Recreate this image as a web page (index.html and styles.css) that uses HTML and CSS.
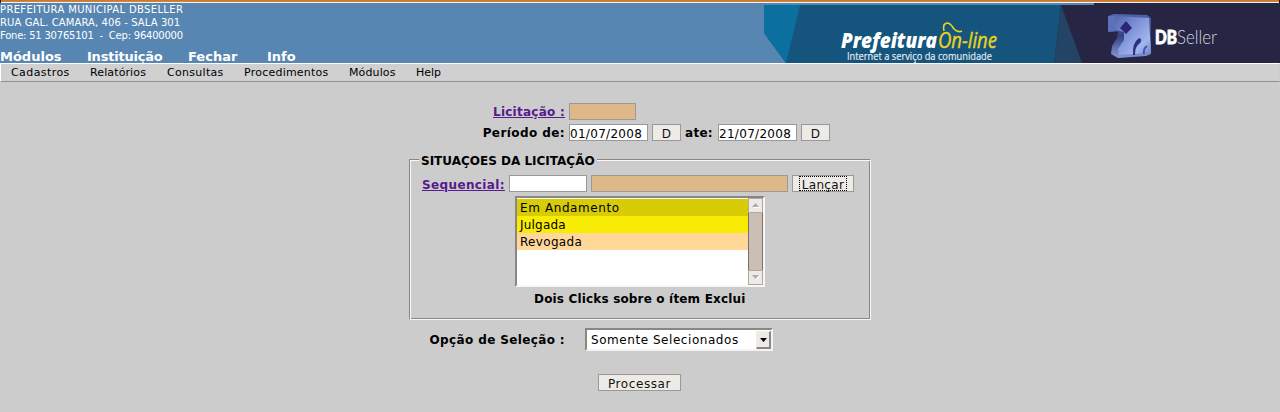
FILE: index.html
```html
<!DOCTYPE html>
<html lang="pt-BR">
<head>
<meta charset="utf-8">
<title>Prefeitura On-line</title>
<link rel="stylesheet" href="styles.css">
</head>
<body>
<div class="topline"></div>
<header class="header">
  <div class="info">
    <div class="address">
      <div class="l1">PREFEITURA MUNICIPAL DBSELLER</div>
      <div class="l2">RUA GAL. CAMARA, 406 - SALA 301</div>
      <div class="l3">Fone: 51 30765101 &nbsp;- &nbsp;Cep: 96400000</div>
    </div>
    <nav class="mainnav">
      <a class="n1">Módulos</a><a class="n2">Instituição</a><a class="n3">Fechar</a><a>Info</a>
    </nav>
  </div>
  <svg class="banner" width="516" height="60" viewBox="0 0 516 60">
    <defs>
      <linearGradient id="cube" x1="0" y1="0" x2="1" y2="1">
        <stop offset="0" stop-color="#5365ad"/><stop offset=".4" stop-color="#7d92d6"/><stop offset=".75" stop-color="#a3b5ee"/><stop offset="1" stop-color="#6c82cf"/>
      </linearGradient>
      <linearGradient id="side" x1="0" y1="0" x2="0" y2="1">
        <stop offset="0" stop-color="#5164ac"/><stop offset=".5" stop-color="#35437f"/><stop offset="1" stop-color="#8797d6"/>
      </linearGradient>
    </defs>
    <path d="M0 2H330V0H516V60H22L0 30Z" fill="#15557d"/>
    <path d="M0 2H36L22 60L0 30Z" fill="#0b709f"/>
    <path d="M297 2H330V0H516V60H290Z" fill="#262644"/>
    <path d="M297 2L318 60H290Z" fill="#234465"/>
    <path d="M344 13L350 11L383 12L387 15V51L382 53L354 55L347 51L348 43L353 35L354 29L344 29Z" fill="url(#side)"/>
    <path d="M351 13L385 15L387 50L355 52L354 46L360 37L360 29L351 27Z" fill="url(#cube)"/>
    <path d="M344 13H351V28L344 29Z" fill="#5d70b8"/>
    <path d="M362 18L368 25L362 31L356 25Z" fill="#292678"/>
    <path d="M369 52Q368 40 375 35Q379 36 376 40Q371 43 371 52Z" fill="#2c327f"/>
    <path d="M380 51Q379 46 383 43" fill="none" stroke="#4657a4" stroke-width="2"/>
    <text class="pref" x="77" y="45" textLength="96" lengthAdjust="spacingAndGlyphs">Prefeitura</text>
    <text class="online" x="174" y="45" textLength="59" lengthAdjust="spacingAndGlyphs">On-line</text>
    <path d="M180 28Q178 20 184 20Q187 21 190 26Q194 30 198 28" fill="none" stroke="#ead31d" stroke-width="1.7"/>
    <text class="slogan" x="83" y="57" textLength="145" lengthAdjust="spacingAndGlyphs">Internet a serviço da comunidade</text>
    <text class="db" x="391" y="41" textLength="22" lengthAdjust="spacingAndGlyphs">DB</text>
    <text class="seller" x="413" y="41" textLength="40" lengthAdjust="spacingAndGlyphs">Seller</text>
  </svg>
</header>
<nav class="menubar">
  <a class="m1">Cadastros</a><a class="m2">Relatórios</a><a class="m3">Consultas</a><a class="m4">Procedimentos</a><a class="m5">Módulos</a><a>Help</a>
</nav>
<main class="form">
  <div class="row licitacao"><a class="label link lic">Licitação :</a><span class="field tan code"></span></div>
  <div class="row periodo">
    <b class="label per">Período de:</b><span class="field date">01/07/2008</span><span class="field btn day">D</span>
    <b class="ate">ate:</b><span class="field date">21/07/2008</span><span class="field btn day">D</span>
  </div>
  <section class="group">
    <b class="legend">SITUAÇOES DA LICITAÇÃO</b>
    <div class="row"><a class="link seq">Sequencial:</a><span class="field num"></span><span class="field tan desc"></span><span class="field btn add"><span class="focus">Lançar</span></span></div>
    <div class="list">
      <div class="items"><div class="item i1">Em Andamento</div><div class="item i2">Julgada</div><div class="item i3">Revogada</div></div>
      <div class="scroll">
        <div class="arrow"><svg width="8" height="5"><path d="M1 5H8L4.500 1" fill="#fff"/><path d="M0 4H7L3.500 0Z" fill="#b0aca6"/></svg></div>
        <div class="thumb"></div>
        <div class="arrow"><svg width="8" height="5"><path d="M1 1H8L4.500 5" fill="#fff"/><path d="M0 0H7L3.500 4Z" fill="#b0aca6"/></svg></div>
      </div>
    </div>
    <b class="note">Dois Clicks sobre o ítem Exclui</b>
  </section>
  <div class="row opcao"><b class="label">Opção de Seleção :</b>
    <div class="select"><span class="value">Somente Selecionados</span><span class="drop"><svg width="7" height="4"><path d="M0 0H7L3.500 4Z"/></svg></span></div>
  </div>
  <span class="field btn process">Processar</span>
</main>
</body>
</html>
```

FILE: styles.css
```css
* { box-sizing: border-box; }
body { margin: 0; height: 412px; overflow: hidden; background: #ccc; color: #000; font: 12px/15px "DejaVu Sans", sans-serif; white-space: nowrap; }
.topline { height: 3px; background: linear-gradient(#c87a33 1px, #cd8642 1px, #cd8642 2px, #f3f0ed 2px); border-left: 1px solid #222; border-right: 1px solid #111; }
.header { display: flex; justify-content: space-between; height: 60px; background: #5786b2; color: #fff; }
.info { display: flex; flex-direction: column; }
.address { font-size: 10px; line-height: 13px; }
.l1 { letter-spacing: .35px; }
.l2 { letter-spacing: .1px; }
.l3 { letter-spacing: -.22px; }
.mainnav { display: flex; margin-top: 7px; font-weight: bold; font-size: 13px; line-height: 15px; }
.n1 { width: 87px; }
.n2 { width: 101px; letter-spacing: -.22px; }
.n3 { width: 79px; }
.banner { display: block; flex: none; }
.pref { font: italic 800 21px "Open Sans", sans-serif; fill: #fff; }
.online { font: italic 22px "Open Sans", sans-serif; fill: #ead31d; stroke: #ead31d; stroke-width: .4px; }
.slogan { font: 10.500px "Open Sans", sans-serif; fill: #e7f0f5; stroke: #e7f0f5; stroke-width: .15px; }
.db { font: 900 18px Lato, sans-serif; fill: #fff; stroke: #fff; stroke-width: .8px; }
.seller { font: 300 19px Lato, sans-serif; fill: #d2d2df; }
.menubar { display: flex; height: 19px; padding: 1px 0 0 10px; border: 1px solid; border-color: #fff transparent #8f928f #fff; background: #d0d0d0; background-clip: padding-box; font-size: 11px; line-height: 15px; }
.m1 { width: 79px; letter-spacing: .42px; }
.m2 { width: 77px; letter-spacing: .12px; }
.m3 { width: 77px; letter-spacing: .3px; }
.m4 { width: 105px; letter-spacing: .23px; }
.m5 { width: 67px; letter-spacing: .12px; }
.form { display: flex; flex-direction: column; align-items: flex-start; padding: 21px 0 0 409px; }
.row { display: flex; align-items: center; gap: 4px; height: 17px; }
.label { width: 156px; padding-top: 2px; text-align: right; font-weight: bold; letter-spacing: .37px; }
.lic { letter-spacing: .25px; }
.per { letter-spacing: .42px; }
.link { color: #551a8b; font-weight: bold; text-decoration: underline; }
.field { display: block; flex: none; height: 17px; border: 1px solid #999; background: #fff; line-height: 18px; letter-spacing: .3px; }
.tan { background: #deb887; }
.code { width: 67px; }
.periodo { margin-top: 4px; }
.date { width: 79px; }
.btn { background: #eeebe7; color: #111; text-align: center; }
.day { width: 29px; }
.ate { width: 29px; padding-top: 2px; letter-spacing: .3px; }
.group { display: flex; flex-direction: column; width: 462px; height: 161px; margin-top: 18px; padding: 1px 0 0 12px; border: 1px solid; border-color: #888880 #f7f7f7 #f7f7f7 #888880; box-shadow: inset 1px 1px #f7f7f7, inset -1px -1px #888880; }
.legend { align-self: flex-start; height: 15px; margin: -8px 0 7px -3px; padding: 0 2px; background: #ccc; line-height: 16px; }
.seq { width: 83px; padding-top: 3px; letter-spacing: .37px; }
.num { width: 78px; }
.desc { width: 197px; }
.add { width: 62px; }
.focus { display: block; width: 48px; height: 15px; margin-left: 6px; border: 1px dotted #000; line-height: 16px; }
.list { display: flex; width: 250px; height: 91px; margin: 4px 0 0 93px; border: 2px solid; border-color: #888880 #f7f7f7 #f7f7f7 #888880; background: #fff; }
.items { flex: 1; padding-top: 1px; }
.item { height: 17px; padding-left: 3px; line-height: 19px; letter-spacing: .2px; }
.i1 { background: #d8cc07; letter-spacing: .6px; }
.i2 { background: #f8ec06; }
.i3 { background: #ffd799; letter-spacing: .32px; }
.scroll { display: flex; flex-direction: column; width: 15px; }
.arrow { display: flex; align-items: center; justify-content: center; height: 15px; border: 1px solid #b4a796; background: #edebe8; }
.thumb { flex: 1; border: 1px solid #7b7068; border-width: 0 1px; background: #cbbfb5; }
.note { margin: 4px 0 0 112px; line-height: 16px; letter-spacing: .17px; }
.opcao { height: 23px; margin-top: 8px; }
.select { display: flex; width: 188px; height: 23px; margin-left: 16px; padding: 1px 0 0; border: 2px solid; border-color: #888880 #f4f4f4 #f4f4f4 #888880; background: #fff; }
.value { flex: 1; padding-left: 4px; line-height: 19px; letter-spacing: .55px; }
.drop { display: flex; align-items: center; justify-content: center; width: 15px; height: 18px; border: 1px solid; border-color: #eee #888 #888 #eee; border-right-width: 2px; border-bottom-width: 2px; background: #eeebe7; }
.process { width: 83px; margin: 23px 0 0 189px; letter-spacing: .6px; }
```
